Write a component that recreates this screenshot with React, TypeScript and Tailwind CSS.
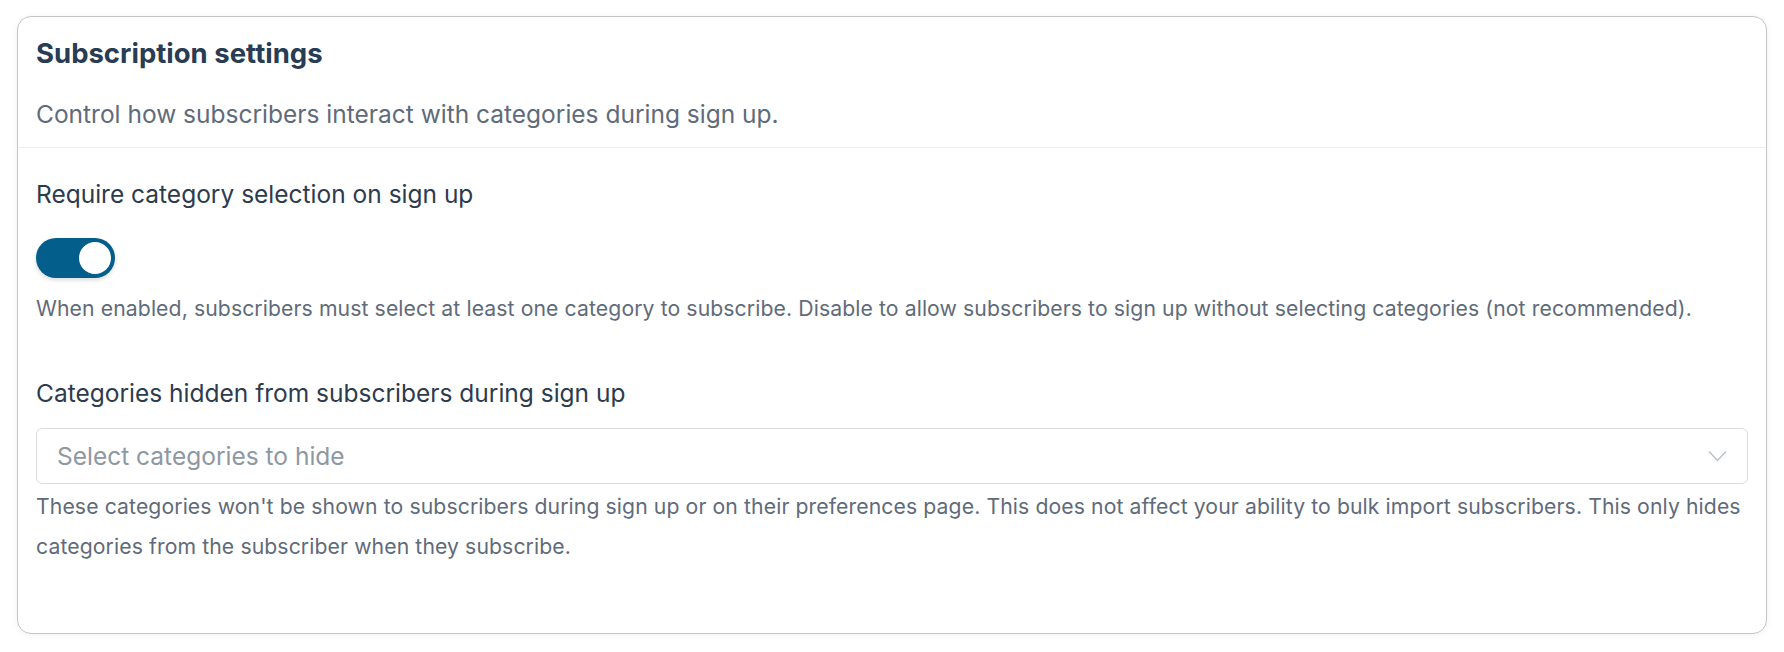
import { useState } from 'react';

function Toggle({ checked, onChange }: { checked: boolean; onChange: (v: boolean) => void }) {
  return (
    <button
      type="button"
      role="switch"
      aria-checked={checked}
      onClick={() => onChange(!checked)}
      className={`flex h-[40px] w-[79px] items-center rounded-full p-[4px] shadow-[0_2px_4px_rgba(0,0,0,0.15)] ${
        checked ? 'justify-end bg-[#035e8c]' : 'justify-start bg-[#d1d5db]'
      }`}
    >
      <span className="block h-[32px] w-[32px] rounded-full bg-white" />
    </button>
  );
}

export default function App() {
  const [requireCategory, setRequireCategory] = useState(true);

  return (
    <div className="min-h-[652px] bg-white px-[17px] pt-[16px] font-['Inter',sans-serif]">
      <div className="h-[618px] rounded-[14px] border border-[#c6c6c6] bg-white shadow-[0_1px_6px_rgba(0,0,0,0.06)]">
        {/* header */}
        <div className="border-b border-[#efefef] px-[18px] pt-[19px] pb-[17px]">
          <h2 className="text-[27.5px] leading-[34px] font-bold text-[#283c55]">Subscription settings</h2>
          <p className="mt-[28px] text-[24.5px] leading-[32px] text-[#5f6b7a]">
            Control how subscribers interact with categories during sign up.
          </p>
        </div>

        {/* body */}
        <div className="px-[18px] pt-[30px]">
          <div>
            <label className="block text-[24.5px] leading-[32px] text-[#2d3b4e]">
              Require category selection on sign up
            </label>
            <div className="mt-[28px]">
              <Toggle checked={requireCategory} onChange={setRequireCategory} />
            </div>
            <p className="mt-[15px] text-[21.2px] leading-[30px] tracking-[0.1px] text-[#5f6b7a]">
              When enabled, subscribers must select at least one category to subscribe. Disable to allow
              subscribers to sign up without selecting categories (not recommended).
            </p>
          </div>

          <div className="mt-[54px]">
            <label className="block text-[24.5px] leading-[32px] text-[#2d3b4e]">
              Categories hidden from subscribers during sign up
            </label>
            <div className="mt-[19px] flex h-[56px] items-center justify-between rounded-[6px] border border-[#dcdcdc] bg-white pr-[20px] pl-[20px]">
              <span className="text-[24.5px] text-[#8e98a3]">Select categories to hide</span>
              <svg width="19" height="12" viewBox="0 0 19 12" fill="none" className="text-[#b9bfc6]">
                <path d="M1 1.5l8.5 9 8.5-9" stroke="currentColor" strokeWidth="1.3" />
              </svg>
            </div>
            <p className="mt-[2px] text-[21.2px] leading-[40px] tracking-[0.1px] text-[#5f6b7a]">
              These categories won't be shown to subscribers during sign up or on their preferences page. This
              does not affect your ability to bulk import subscribers. This only hides categories from the
              subscriber when they subscribe.
            </p>
          </div>
        </div>
      </div>
    </div>
  );
}
